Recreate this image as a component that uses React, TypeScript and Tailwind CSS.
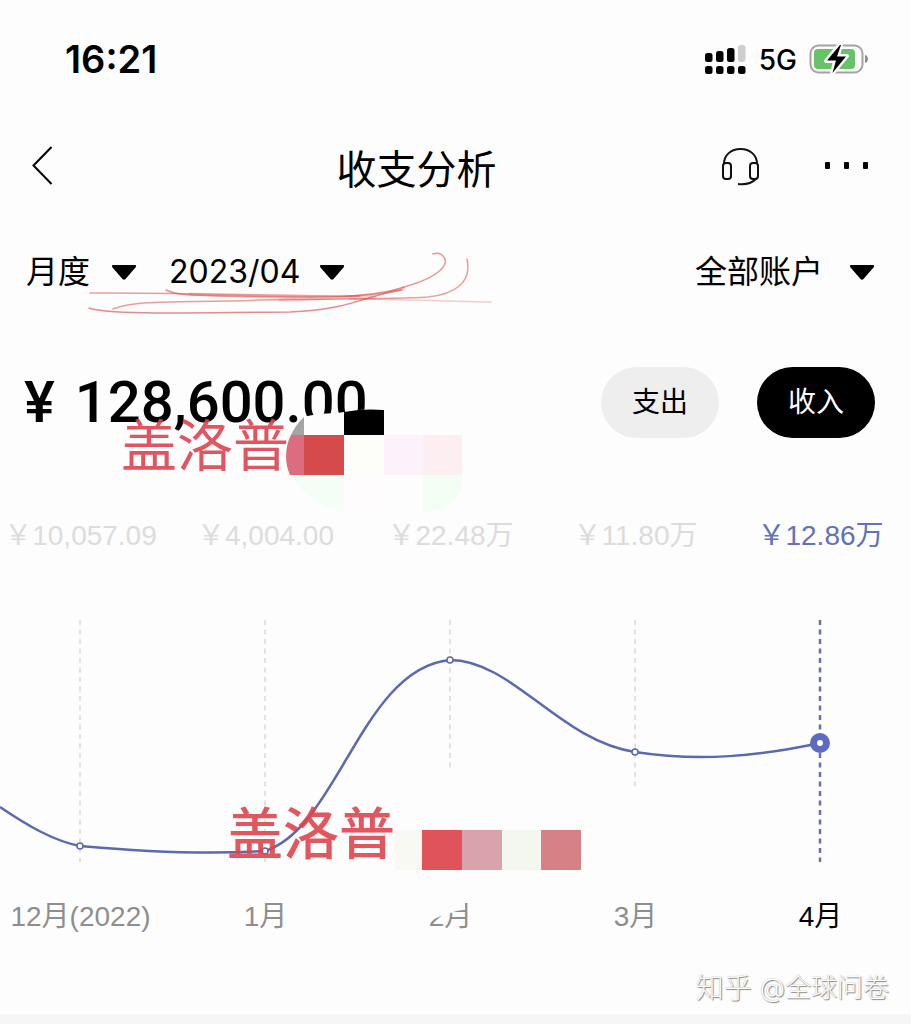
import { useState } from "react"
import clsx from "clsx"

interface MonthModel {
    label: string
    amount: string
    x: number
    y: number
    lineEnd: number
}

const months: MonthModel[] = [
    { label: "12月(2022)", amount: "￥10,057.09", x: 80, y: 846, lineEnd: 862 },
    { label: "1月", amount: "￥4,004.00", x: 265, y: 851, lineEnd: 862 },
    { label: "2月", amount: "￥22.48万", x: 450, y: 660, lineEnd: 768 },
    { label: "3月", amount: "￥11.80万", x: 635, y: 752, lineEnd: 786 },
    { label: "4月", amount: "￥12.86万", x: 820, y: 743, lineEnd: 862 },
]

const StatusBar = () => (
    <div className="flex h-[118px] items-center pr-[42px] pl-[65px] font-['Inter',sans-serif]">
        <span className="text-[38px] leading-10 font-semibold">16:21</span>
        <svg className="ml-auto" width="42" height="30" viewBox="0 0 42 30" aria-hidden="true">
            <rect x="0" y="9" width="7.500" height="9" rx="2.500" />
            <rect x="11" y="7" width="7.500" height="11" rx="2.500" />
            <rect x="22" y="4" width="7.500" height="14" rx="2.500" />
            <rect x="33" y="1" width="7.500" height="17" rx="3" fill="#cfcfcf" />
            <rect x="0" y="22" width="7.500" height="8" rx="2.500" />
            <rect x="11" y="22" width="7.500" height="8" rx="2.500" />
            <rect x="22" y="22" width="7.500" height="8" rx="2.500" />
            <rect x="33" y="22" width="7.500" height="8" rx="2.500" />
        </svg>
        <span className="ml-3 pt-0.5 text-[28px] leading-10 font-medium">5G</span>
        <svg className="ml-3" width="60" height="32" viewBox="0 0 60 32" aria-hidden="true">
            <rect x="1.500" y="2.500" width="52" height="27" rx="8" fill="none" stroke="#a3a3a3" strokeWidth="2" />
            <rect x="5" y="6" width="41" height="20" rx="4" fill="#65c466" />
            <path d="M56 12c4 1 4 7 0 8z" fill="#8c8c8c" />
            <path d="M31 1L17 18h9l-3 13 15-18h-9l3-12z" stroke="#fdfdfd" strokeWidth="4" strokeLinejoin="round" />
            <path d="M31 2L18 17.500h9L23.500 30 37 13.500h-9L32 2z" />
        </svg>
    </div>
)

const Header = () => (
    <header className="flex h-[100px] items-center pr-[42px] pb-1 pl-8">
        <button type="button" aria-label="返回" className="w-20">
            <svg width="22" height="40" viewBox="0 0 22 40" fill="none" stroke="#000" strokeWidth="2">
                <path d="M19.500 1L1.500 19.500l18 18.500" />
            </svg>
        </button>
        <h1 className="flex-1 pt-2 text-center text-[40px] leading-[48px]">收支分析</h1>
        <button type="button" aria-label="客服">
            <svg width="40" height="40" viewBox="0 0 40 40" fill="none" stroke="#111" strokeWidth="2">
                <path d="M3 18C3 9 10 3 19.500 3S36 9 36 18" />
                <rect x="2" y="17" width="8" height="16" rx="3" />
                <rect x="29" y="17" width="8" height="16" rx="3" />
                <path d="M35 33c-4 4-9 6-18 5" />
            </svg>
        </button>
        <button type="button" aria-label="更多" className="ml-16">
            <svg width="44" height="8" viewBox="0 0 44 8">
                <rect x="0" width="5" height="7" rx="1" />
                <rect x="19" width="5" height="7" rx="1" />
                <rect x="38" width="5" height="7" rx="1" />
            </svg>
        </button>
    </header>
)

interface FilterProps {
    name: string
    className: string
    options: string[]
}

const Filter = ({ name, className, options }: FilterProps) => (
    <label className={clsx("relative block", className)}>
        <select aria-label={name} className="block w-full appearance-none bg-transparent text-[32px] leading-10">
            {options.map((option) => <option key={option}>{option}</option>)}
        </select>
        <svg className="pointer-events-none absolute top-3 right-0" width="26" height="17" viewBox="0 0 26 17" aria-hidden="true">
            <path d="M2 1h22q2 .5 .5 2.500L14.500 15q-1.500 1.500-3 0L1.500 3.500Q0 1.500 2 1z" />
        </svg>
    </label>
)

const Scribble = () => (
    <svg className="pointer-events-none absolute top-7 left-[80px]" width="420" height="76" viewBox="80 246 420 76" fill="none" stroke="#d8403c" strokeWidth="1.500" strokeLinecap="round" aria-hidden="true">
        <path d="M90 293C150 292 270 296 360 296" opacity=".5" />
        <path d="M166 290C180 297 205 295 240 296C330 298 375 298 404 287C440 277 452 263 442 255Q439 252 433 254" opacity=".55" />
        <path d="M113 309C140 299 180 303 260 300C340 298 380 300 428 297C456 294 472 282 467 259" opacity=".5" />
        <path d="M89 308C110 316 220 312 290 312C350 310 370 294 402 290" opacity=".6" />
        <path d="M190 294C260 298 320 298 375 297M280 300C330 299 380 296 404 288" strokeWidth="3" opacity=".25" />
        <path d="M350 299C400 299 440 301 491 302" opacity=".25" />
    </svg>
)

const Mosaic = () => (
    <svg className="pointer-events-none absolute top-[84px] left-[284px]" width="182" height="112" viewBox="284 408 182 112" aria-hidden="true">
        <clipPath id="brush">
            <path d="M290 475C281 455 288 432 304 417C320 412 336 414 344 412C360 409 372 409 384 410L464 430V475C462 500 446 511 423 512L384 516C344 518 310 506 290 475z" />
        </clipPath>
        <g clipPath="url(#brush)">
            <rect x="284" y="408" width="182" height="112" fill="#fdfdfd" />
            <rect x="284" y="408" width="20" height="27" fill="#a5a5a5" />
            <rect x="344" y="408" width="40" height="27" fill="#000" />
            <rect x="284" y="435" width="20" height="40" fill="#dc6c80" />
            <rect x="304" y="435" width="40" height="40" fill="#d54b4b" />
            <rect x="344" y="435" width="40" height="40" fill="#fdfdf9" />
            <rect x="384" y="435" width="39" height="40" fill="#fbf2fb" />
            <rect x="423" y="435" width="39" height="40" fill="#fdeff1" />
            <rect x="284" y="475" width="60" height="40" fill="#f5fef6" />
            <rect x="344" y="475" width="40" height="40" fill="#fefcfd" />
            <rect x="423" y="475" width="39" height="40" fill="#f2fdf4" />
        </g>
    </svg>
)

const Chart = () => (
    <div className="relative">
        <svg className="block w-full" viewBox="0 592 911 290" fill="none" role="img" aria-label="收入走势">
            {months.map((month, index) => (
                <path
                    key={month.label}
                    d={`M${month.x} 620V${month.lineEnd}`}
                    stroke={index === 4 ? "#6572aa" : "#d9d9dd"}
                    strokeWidth={index === 4 ? 2.5 : 1.5}
                    strokeDasharray="5 4.500"
                />
            ))}
            <path
                d="M0 807C28 826 54 841 80 846C135 851 200 855 265 851C338 828 362 668 450 660C512 660 560 741 635 752C700 762 760 756 820 743"
                stroke="#5b69ae"
                strokeWidth="2.500"
            />
            {months.slice(0, 4).map((month) => (
                <circle key={month.label} cx={month.x} cy={month.y} r="3" fill="#fdfdfd" stroke="#5b69ae" strokeWidth="1.500" />
            ))}
            <circle cx="820" cy="743" r="6.500" fill="#fdfdfd" stroke="#5c6ac4" strokeWidth="7" />
        </svg>
        <span className="pointer-events-none absolute top-[212px] left-[227px] text-[56px] leading-[60px] font-medium text-[#e0444c] opacity-90">盖洛普</span>
        <svg className="pointer-events-none absolute top-[238px] left-[395px]" width="187" height="40" aria-hidden="true">
            <rect width="28" height="40" fill="#f9f9f3" />
            <rect x="27" width="40" height="40" fill="#e0535b" />
            <rect x="67" width="40" height="40" fill="#daa3ab" />
            <rect x="107" width="39" height="40" fill="#f4f6f0" />
            <rect x="146" width="40" height="40" fill="#d58185" />
        </svg>
    </div>
)

export default function App() {
    const [kind, setKind] = useState("收入")

    return (
        <main className="overflow-hidden bg-[#fdfdfd] font-['Inter','Noto_Sans_CJK_SC',sans-serif] text-black">
            <StatusBar />
            <Header />

            <section className="relative flex h-[106px] items-center gap-8 pt-0.5 pr-9 pl-[26px]">
                <Filter name="周期" className="w-[111px]" options={["月度", "年度"]} />
                <Filter name="月份" className="w-[176px]" options={["2023/04", "2023/03"]} />
                <Filter name="账户" className="ml-auto w-[180px]" options={["全部账户"]} />
                <Scribble />
            </section>

            <section className="relative flex h-[156px] items-center pr-9 pl-6">
                <p className="flex gap-5 font-['Roboto',sans-serif] text-[58px] leading-[72px] font-medium">
                    <span>¥</span>
                    <span>128,600.00</span>
                </p>
                <div className="ml-auto flex gap-[38px]">
                    {["支出", "收入"].map((item) => (
                        <button
                            key={item}
                            type="button"
                            aria-pressed={kind === item}
                            onClick={() => setKind(item)}
                            className={clsx(
                                "h-[71px] w-[118px] rounded-full text-[28px]",
                                kind === item ? "bg-black text-white" : "bg-[#eeeeee] text-black",
                            )}
                        >
                            {item}
                        </button>
                    ))}
                </div>
                <span className="pointer-events-none absolute top-[92px] left-[121px] text-[56px] leading-[60px] text-[#dd4450] opacity-90">盖洛普</span>
                <Mosaic />
            </section>

            <ul className="-mr-0.5 -ml-3 grid h-[112px] grid-cols-5 items-center text-center font-['Liberation_Sans','Noto_Sans_CJK_SC',sans-serif] text-[28px] leading-10 whitespace-nowrap">
                {months.map((month, index) => (
                    <li key={month.label} className={index === 4 ? "text-[#6371b8]" : "text-[#dcdcdc]"}>{month.amount}</li>
                ))}
            </ul>

            <Chart />

            <ul className="-mr-0.5 -ml-3 grid h-[70px] grid-cols-5 items-center text-center font-['Liberation_Sans','Noto_Sans_CJK_SC',sans-serif] text-[28px] leading-10 whitespace-nowrap">
                {months.map((month, index) => (
                    <li key={month.label} className={clsx("relative", index === 4 ? "text-black" : "text-[#8e8e8e]")}>
                        {month.label}
                        {index === 2 && (
                            <svg className="absolute top-0 left-1/2 -ml-7" width="56" height="40" viewBox="0 0 56 40" aria-hidden="true">
                                <path d="M0 0H42V13Q34 13 28 16Q22 16 16 20L0 26z" fill="#fdfdfd" />
                            </svg>
                        )}
                    </li>
                ))}
            </ul>

            <footer>
                <p className="flex h-[62px] items-end justify-end gap-2 pr-[22px] pb-1.5 text-[26px] leading-10 font-light text-[#fdfdfd] [text-shadow:1px_1px_1px_#888,0_0_1px_#aaa]">
                    <span className="text-[28px]">知乎</span>
                    <span>@全球问卷</span>
                </p>
                <div className="h-[10px] bg-[#f6f6f6]" />
            </footer>
        </main>
    )
}
